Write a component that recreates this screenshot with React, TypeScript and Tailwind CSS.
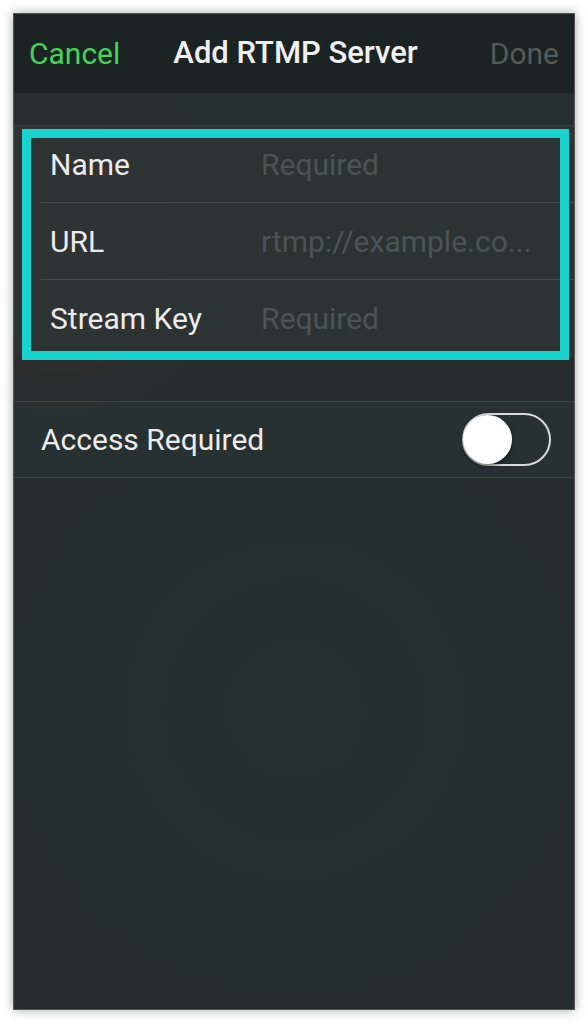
import { ReactNode } from "react";

function Row({ label, placeholder, divider }: { label: string; placeholder: string; divider?: boolean }) {
  return (
    <div className="relative flex h-[77px] items-center pl-[36px]">
      <span className="w-[211px] text-[30px] text-[#ececec]">{label}</span>
      <span className="text-[30px] text-[#4b5454]">{placeholder}</span>
      {divider && <div className="absolute bottom-0 left-[27px] right-0 h-px bg-[#434c4c]" />}
    </div>
  );
}

function Toggle() {
  return (
    <div className="relative h-[53px] w-[89px] rounded-full border-2 border-[#d8dada]">
      <div className="absolute left-[-1px] top-[0px] h-[49px] w-[49px] rounded-full bg-white shadow-[0_2px_4px_rgba(0,0,0,0.5)]" />
    </div>
  );
}

function Screen({ children }: { children: ReactNode }) {
  return (
    <div className="flex h-[997px] w-[562px] flex-col overflow-hidden border border-[#555] bg-[#252d2d] bg-[radial-gradient(circle_at_50%_70%,#22302f_0%,transparent_40%),radial-gradient(circle_at_8%_22%,#3a2e2e_0%,transparent_22%)] shadow-[0_0_10px_rgba(0,0,0,0.35)]">
      {children}
    </div>
  );
}

export default function App() {
  return (
    <div className="flex h-[1024px] w-[588px] justify-center bg-white pt-[13px] font-['Roboto',sans-serif]">
      <Screen>
        <div className="flex h-[79px] items-center bg-[#1c2323] px-[15px]">
          <span className="text-[30px] text-[#45d35a]">Cancel</span>
          <span className="ml-[53px] text-[31px] font-medium text-[#f0f0f0]">Add RTMP Server</span>
          <span className="ml-auto text-[30px] text-[#535a5a]">Done</span>
        </div>
        <div className="h-[33px] border-b border-[#3a4343] bg-[#273030]/80" />
        <div className="relative bg-[#2d3636]/70">
          <Row label="Name" placeholder="Required" divider />
          <Row label="URL" placeholder="rtmp://example.co..." divider />
          <Row label="Stream Key" placeholder="Required" />
          <div className="absolute left-[8px] right-[5px] top-[3px] bottom-[-3px] border-[9px] border-[#19d3ce]" />
        </div>
        <div className="h-[44px]" />
        <div className="flex h-[77px] items-center justify-between border-y border-[#3b4444] bg-[#2a3333]/70 pl-[27px] pr-[23px]">
          <span className="text-[30px] text-[#ececec]">Access Required</span>
          <Toggle />
        </div>
      </Screen>
    </div>
  );
}
